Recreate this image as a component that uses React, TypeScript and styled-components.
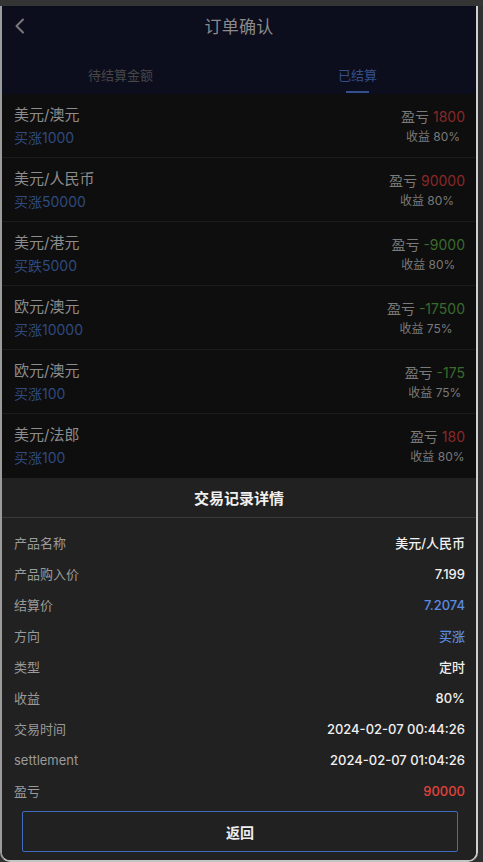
import React from 'react'
import styled, { createGlobalStyle } from 'styled-components'

const GlobalStyle = createGlobalStyle`
  html, body {
    margin: 0;
    padding: 0;
    background: #303030;
  }
  body {
    font-family: 'Inter', 'Noto Sans CJK SC', sans-serif;
    -webkit-font-smoothing: antialiased;
  }
`

const Screen = styled.div`
  width: 483px;
  height: 862px;
  display: flex;
  flex-direction: column;
  background: #303030;
  overflow: hidden;
`

const TopStrip = styled.div`
  height: 6px;
  flex-shrink: 0;
  background: #343434;
`

const Window = styled.div`
  width: 474px;
  height: 854px;
  display: flex;
  flex-direction: column;
  border-left: 2px solid #9c9c9c;
  border-right: 2px solid #d0d0d0;
  border-bottom: 2px solid #c4c4c4;
  border-radius: 0 0 10px 10px;
  overflow: hidden;
  background: #0e0e0e;
`

const Header = styled.div`
  height: 39px;
  flex-shrink: 0;
  background: #0c0d1d;
  display: flex;
  align-items: center;
  justify-content: center;
  position: relative;
`

const BackButton = styled.div`
  position: absolute;
  left: 11px;
  top: 12px;
  width: 14px;
  height: 16px;
  display: flex;
`

const Title = styled.div`
  font-size: 17px;
  color: #8a8a8a;
  letter-spacing: 0.3px;
`

const Tabs = styled.div`
  height: 49px;
  flex-shrink: 0;
  background: #0c0d1d;
  display: grid;
  grid-template-columns: 1fr 1fr;
`

const Tab = styled.div<{ $active?: boolean }>`
  display: flex;
  flex-direction: column;
  align-items: center;
  justify-content: flex-end;
  font-size: 13px;
  color: ${({ $active }) => ($active ? '#34508a' : '#474747')};

  span {
    line-height: 20px;
    margin-bottom: 6px;
  }

  &::after {
    content: '';
    width: 23px;
    height: 2px;
    margin-bottom: 1px;
    background: ${({ $active }) => ($active ? '#34508a' : 'transparent')};
  }
`

const List = styled.div`
  flex-shrink: 0;
  background: #0e0e0e;
`

const OrderRow = styled.div`
  display: flex;
  justify-content: space-between;
  align-items: center;
  padding: 10px 11px 8px 12px;
  border-bottom: 1px solid #1b1b1b;

  &:last-child {
    border-bottom: none;
    padding-bottom: 9px;
  }
`

const OrderInfo = styled.div`
  display: flex;
  flex-direction: column;
`

const PairName = styled.div`
  font-size: 15px;
  line-height: 22px;
  color: #8c8c8c;
`

const OrderAmount = styled.div`
  font-size: 14px;
  line-height: 22px;
  margin-top: 1px;
  color: #2e4a7e;
`

const OrderResult = styled.div`
  display: flex;
  flex-direction: column;
  align-items: center;
`

const ProfitLine = styled.div`
  font-size: 14px;
  line-height: 20px;
  color: #7a7a7a;
`

const ProfitValue = styled.span<{ $loss?: boolean }>`
  color: ${({ $loss }) => ($loss ? '#3b6b2c' : '#8a2828')};
`

const RateLine = styled.div`
  font-size: 12px;
  line-height: 20px;
  color: #7a7a7a;
`

const Sheet = styled.div`
  flex: 1;
  background: #212121;
  display: flex;
  flex-direction: column;
`

const SheetTitle = styled.div`
  height: 39px;
  display: flex;
  align-items: center;
  justify-content: center;
  font-size: 15px;
  font-weight: 700;
  color: #f0f0f0;
  border-bottom: 1px solid #3a3a3a;
`

const DetailList = styled.div`
  padding: 9px 11px 0 12px;
`

const DetailRow = styled.div`
  height: 31px;
  display: flex;
  align-items: center;
  justify-content: space-between;
  font-size: 13px;
`

const DetailLabel = styled.span`
  color: #9a9a9a;
`

const DetailValue = styled.span<{ $tone?: 'blue' | 'red' }>`
  color: ${({ $tone }) =>
    $tone === 'blue' ? '#5b8be0' : $tone === 'red' ? '#e0443c' : '#f0f0f0'};
  font-weight: 500;
`

const ReturnButton = styled.button`
  margin: 5px 18px 0 20px;
  height: 41px;
  background: transparent;
  border: 1px solid #3f6bbd;
  border-radius: 2px;
  color: #eeeeee;
  font-family: inherit;
  font-size: 14px;
  font-weight: 700;
  cursor: pointer;
`

const orders = [
  { pair: '美元/澳元', action: '买涨1000', profit: '1800', rate: '80%' },
  { pair: '美元/人民币', action: '买涨50000', profit: '90000', rate: '80%' },
  { pair: '美元/港元', action: '买跌5000', profit: '-9000', rate: '80%' },
  { pair: '欧元/澳元', action: '买涨10000', profit: '-17500', rate: '75%' },
  { pair: '欧元/澳元', action: '买涨100', profit: '-175', rate: '75%' },
  { pair: '美元/法郎', action: '买涨100', profit: '180', rate: '80%' },
]

const details: { label: string; value: string; tone?: 'blue' | 'red' }[] = [
  { label: '产品名称', value: '美元/人民币' },
  { label: '产品购入价', value: '7.199' },
  { label: '结算价', value: '7.2074', tone: 'blue' },
  { label: '方向', value: '买涨', tone: 'blue' },
  { label: '类型', value: '定时' },
  { label: '收益', value: '80%' },
  { label: '交易时间', value: '2024-02-07 00:44:26' },
  { label: 'settlement', value: '2024-02-07 01:04:26' },
  { label: '盈亏', value: '90000', tone: 'red' },
]

const App = () => {
  return (
    <>
      <GlobalStyle />
      <Screen>
        <TopStrip />
        <Window>
          <Header>
            <BackButton>
              <svg width="14" height="16" viewBox="0 0 14 16" fill="none">
                <path d="M10 1.5 L3.5 8 L10 14.5" stroke="#7a7a7a" strokeWidth="2" strokeLinecap="round" strokeLinejoin="round" />
              </svg>
            </BackButton>
            <Title>订单确认</Title>
          </Header>
          <Tabs>
            <Tab><span>待结算金额</span></Tab>
            <Tab $active><span>已结算</span></Tab>
          </Tabs>
          <List>
            {orders.map((o, i) => (
              <OrderRow key={i}>
                <OrderInfo>
                  <PairName>{o.pair}</PairName>
                  <OrderAmount>{o.action}</OrderAmount>
                </OrderInfo>
                <OrderResult>
                  <ProfitLine>
                    盈亏 <ProfitValue $loss={o.profit.startsWith('-')}>{o.profit}</ProfitValue>
                  </ProfitLine>
                  <RateLine>收益 {o.rate}</RateLine>
                </OrderResult>
              </OrderRow>
            ))}
          </List>
          <Sheet>
            <SheetTitle>交易记录详情</SheetTitle>
            <DetailList>
              {details.map((d) => (
                <DetailRow key={d.label}>
                  <DetailLabel>{d.label}</DetailLabel>
                  <DetailValue $tone={d.tone}>{d.value}</DetailValue>
                </DetailRow>
              ))}
            </DetailList>
            <ReturnButton>返回</ReturnButton>
          </Sheet>
        </Window>
      </Screen>
    </>
  )
}

export default App
